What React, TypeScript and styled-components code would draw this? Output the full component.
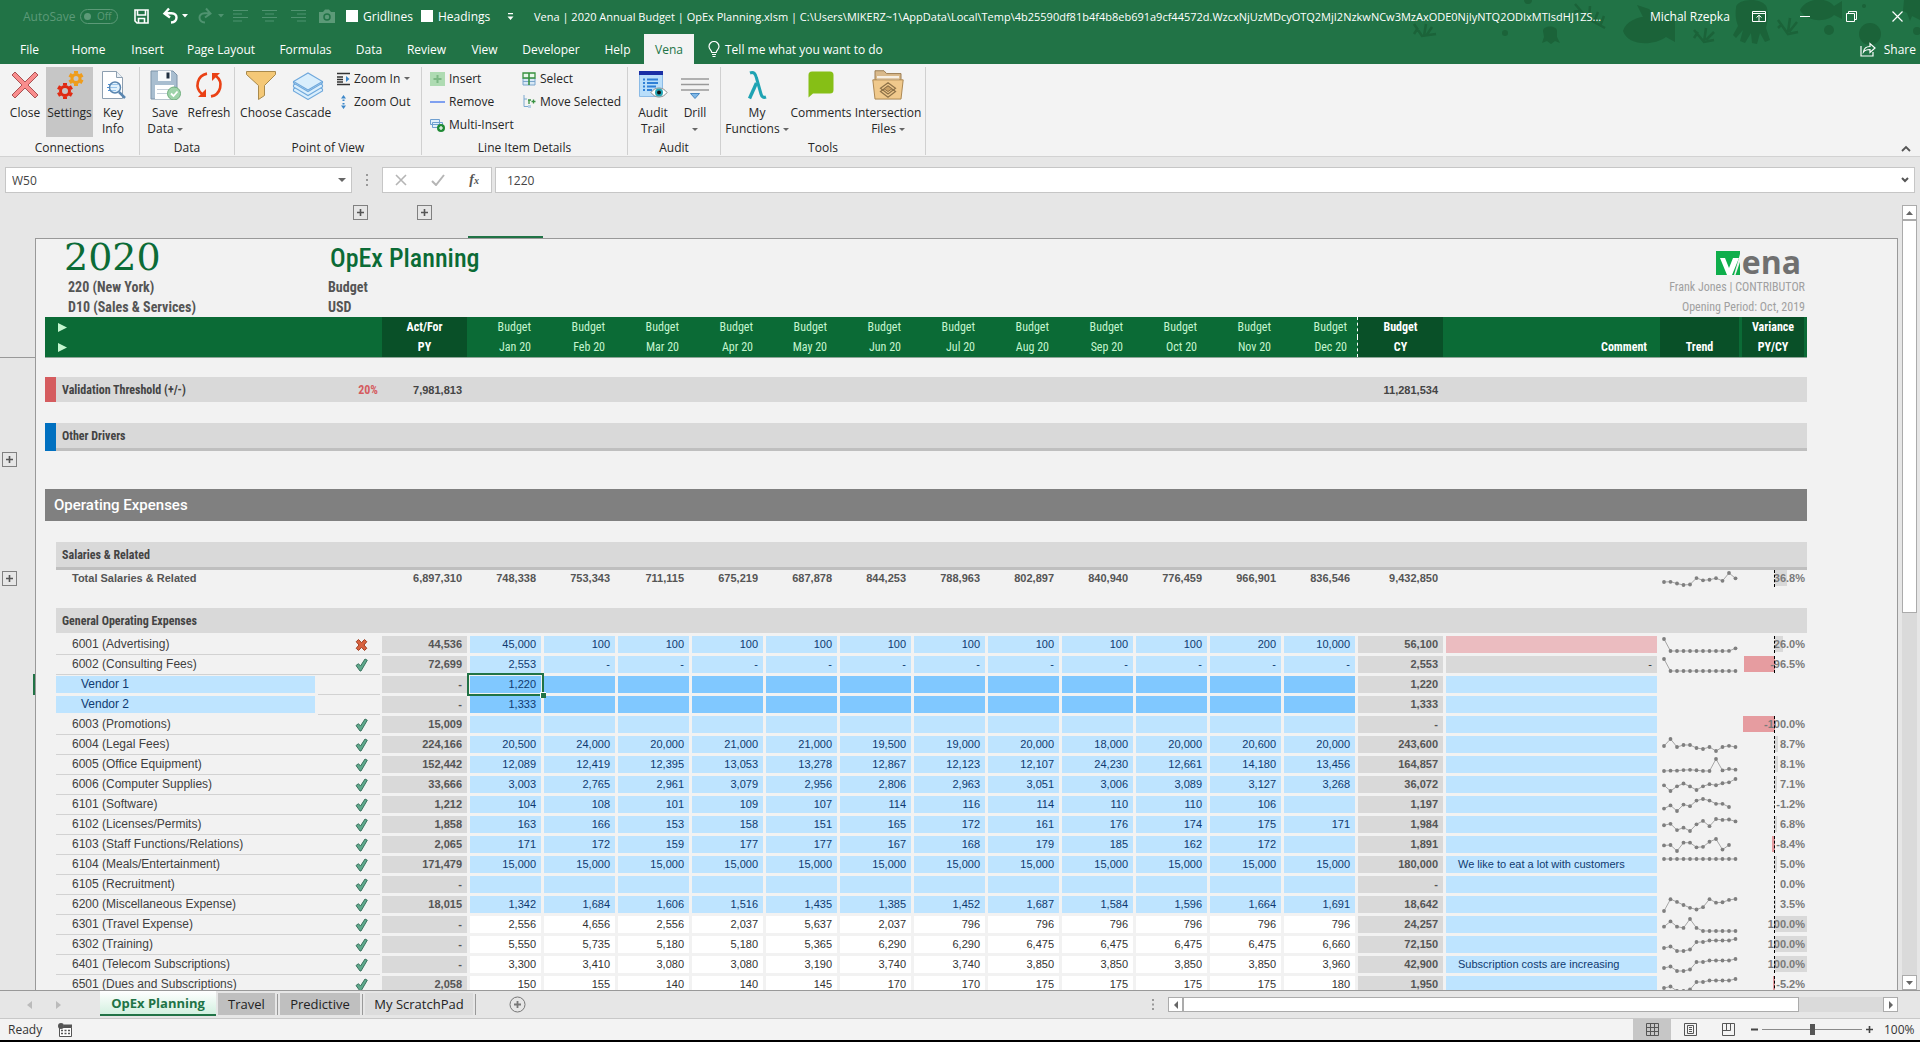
import React from "react";
import styled, { createGlobalStyle, css } from "styled-components";

const UI = `"Open Sans", "Noto Sans", sans-serif`;
const GRID = `"Liberation Sans", Arial, sans-serif`;
const NARROW = `"Liberation Sans Narrow", "Arial Narrow", "Roboto Condensed", Roboto, sans-serif`;

const Global = createGlobalStyle`
  *, *::before, *::after { box-sizing: border-box; }
  body { margin: 0; background: #000; font-family: ${UI}; font-size: 12px; color: #262626; }
  button, input { font: inherit; color: inherit; }
  button { margin: 0; padding: 0; border: 0; background: none; cursor: default; white-space: nowrap; }
  svg { display: block; flex: none; }
`;

/* ---------- frame ---------- */

const Window = styled.div`
  height: 100vh;
  display: flex;
  flex-direction: column;
  overflow: hidden;
  background: #e6e6e6;
  border-bottom: 2px solid #000;
`;

const Header = styled.header`
  position: relative;
  flex: none;
  background: #217346;
  color: #fff;
`;

const Doodles = styled.svg`
  position: absolute;
  top: 0;
  right: 0;
`;

const TitleBar = styled.div`
  position: relative;
  display: flex;
  align-items: center;
  height: 32px;
  padding-left: 23px;
`;

const QuickAccess = styled.div`
  display: flex;
  align-items: center;
  width: 511px;
  flex: none;
`;

const QuickButton = styled.button<{ $w: number }>`
  width: ${(p) => p.$w}px;
  height: 20px;
  flex: none;
`;

const AutoSave = styled.span`
  width: 57px;
  color: #5c9a78;
`;

const Switch = styled.button`
  display: flex;
  align-items: center;
  gap: 6px;
  width: 38px;
  height: 15px;
  margin-right: 16px;
  padding: 0 5px 0 3px;
  border: 1px solid #5c9a78;
  border-radius: 8px;
  color: #5c9a78;
  font-size: 10px;
  line-height: 12px;
  &::before {
    content: "";
    width: 7px;
    height: 7px;
    border-radius: 50%;
    background: #5c9a78;
  }
`;

const CheckLabel = styled.label<{ $w: number }>`
  display: flex;
  align-items: center;
  gap: 5px;
  width: ${(p) => p.$w}px;
  flex: none;
  white-space: nowrap;
`;

const Check = styled.input`
  appearance: none;
  width: 12px;
  height: 12px;
  margin: 0;
  background: #fff;
`;

const Title = styled.div`
  flex: 1;
  min-width: 0;
  white-space: nowrap;
  font-size: 11px;
`;

const WindowControls = styled.div`
  display: flex;
  align-items: center;
  flex: none;
`;

const User = styled.span`
  width: 86px;
  margin-left: 16px;
  white-space: nowrap;
`;

const ControlButton = styled.button`
  display: flex;
  align-items: center;
  justify-content: center;
  width: 46px;
  height: 30px;
`;

const TabBar = styled.nav`
  position: relative;
  display: flex;
  align-items: flex-end;
  height: 32px;
  padding-left: 3px;
`;

const RibbonTab = styled.button<{ $w: number; $active?: boolean }>`
  width: ${(p) => p.$w}px;
  height: 30px;
  ${(p) => p.$active && css`background: #f3f3f3; color: #217346;`}
`;

const TellMe = styled.button`
  display: flex;
  align-items: center;
  gap: 5px;
  height: 30px;
  margin-left: 14px;
`;

const Share = styled.button`
  display: flex;
  align-items: center;
  gap: 8px;
  height: 30px;
  margin: 0 4px 0 auto;
`;

/* ---------- ribbon ---------- */

const Ribbon = styled.section`
  display: flex;
  flex: none;
  height: 93px;
  background: #f3f3f3;
  border-bottom: 1px solid #d2d2d2;
`;

const Group = styled.div<{ $w: number }>`
  display: flex;
  flex-direction: column;
  width: ${(p) => p.$w}px;
  margin: 3px 0 1px;
  border-right: 1px solid #d0d0d0;
`;

const GroupBody = styled.div`
  display: flex;
  flex: 1;
  padding-left: 4px;
`;

const GroupName = styled.div`
  height: 16px;
  line-height: 18px;
  text-align: center;
`;

const BigButton = styled.button<{ $w: number; $on?: boolean }>`
  display: flex;
  flex-direction: column;
  align-items: center;
  width: ${(p) => p.$w}px;
  height: 70px;
  padding-top: 3px;
  line-height: 16px;
  background: ${(p) => (p.$on ? "#c6c6c6" : "none")};
  & > svg { margin-bottom: 5px; }
`;

const Line = styled.span`
  display: flex;
  align-items: center;
  gap: 3px;
  min-height: 16px;
`;

const Stack = styled.div<{ $w: number; $ml?: number }>`
  display: flex;
  flex-direction: column;
  width: ${(p) => p.$w}px;
  margin-left: ${(p) => p.$ml ?? 0}px;
`;

const SmallButton = styled.button`
  display: flex;
  align-items: center;
  gap: 4px;
  height: 23px;
`;

const Collapse = styled.button`
  align-self: flex-end;
  margin: 0 9px 4px auto;
`;

/* ---------- formula bar ---------- */

const FormulaBar = styled.div`
  display: flex;
  align-items: center;
  flex: none;
  height: 36px;
  padding: 10px 5px 0;
`;

const Field = styled.div<{ $w?: number }>`
  display: flex;
  align-items: center;
  ${(p) => (p.$w ? css`width: ${p.$w}px; flex: none;` : css`flex: 1;`)}
  height: 26px;
  background: #fff;
  border: 1px solid #c6c6c6;
  padding-right: 5px;
`;

const TextBox = styled.input<{ $pad: number }>`
  flex: 1;
  min-width: 0;
  height: 22px;
  border: 0;
  outline: 0;
  padding: 0 0 0 ${(p) => p.$pad}px;
  background: transparent;
  font-size: 12px;
  color: #444;
`;

const Grip = styled.div`
  width: 30px;
  display: flex;
  justify-content: center;
`;

const FormulaButtons = styled.div`
  display: flex;
  align-items: center;
  justify-content: space-around;
  width: 110px;
  height: 26px;
  margin-right: 3px;
  background: #fff;
  border: 1px solid #c6c6c6;
`;

const Fx = styled.button`
  font-family: "Liberation Serif", serif;
  font-style: italic;
  font-weight: bold;
  font-size: 14px;
  color: #555;
  & > sub { font-size: 10px; vertical-align: baseline; }
`;

/* ---------- work area ---------- */

const Work = styled.main`
  display: flex;
  flex: 1;
  min-height: 0;
`;

const SheetColumn = styled.div`
  display: flex;
  flex-direction: column;
  flex: 1;
  min-width: 0;
`;

const ColumnOutline = styled.div`
  display: flex;
  flex: none;
  height: 45px;
  padding: 12px 0 0 353px;
`;

const Expand = styled.button<{ $mt?: number }>`
  display: flex;
  align-items: center;
  justify-content: center;
  flex: none;
  width: 15px;
  height: 15px;
  margin-top: ${(p) => p.$mt ?? 0}px;
  border: 1px solid #808080;
`;

const ExpandGap = styled.div`
  width: 49px;
`;

const ColumnMark = styled.div`
  align-self: flex-end;
  width: 75px;
  height: 2px;
  margin-left: 36px;
  background: #217346;
`;

const SheetRow = styled.div`
  display: flex;
  flex: 1;
  min-height: 0;
`;

const RowOutline = styled.div`
  flex: none;
  width: 35px;
  overflow: hidden;
`;

const Frozen = styled.div`
  height: 120px;
  border-bottom: 1px solid #999;
`;

const RowMarks = styled.div`
  display: flex;
  flex-direction: column;
  padding: 94px 0 0 2px;
`;

const RowMark = styled.div`
  align-self: flex-end;
  width: 2px;
  height: 21px;
  margin-top: 88px;
  background: #217346;
`;

const Sheet = styled.div`
  display: flex;
  flex-direction: column;
  flex: 1;
  min-width: 0;
  background: #f2f2f2;
  border: 1px solid #999;
  border-bottom: 0;
`;

const GridPane = styled.div`
  flex: 1;
  min-height: 0;
  overflow: hidden;
`;

const Info = styled.div`
  display: flex;
  flex: none;
  height: 78px;
  padding: 0 92px 0 28px;
  color: #555;
`;

const InfoBlock = styled.div<{ $w?: number; $right?: boolean }>`
  display: flex;
  flex-direction: column;
  ${(p) => (p.$w ? css`width: ${p.$w}px;` : css`flex: 1;`)}
  align-items: ${(p) => (p.$right ? "flex-end" : "flex-start")};
`;

const Year = styled.h1`
  margin: 0;
  height: 38px;
  line-height: 36px;
  font-family: "DejaVu Serif", serif;
  font-weight: normal;
  font-size: 38px;
  color: #0b6b36;
`;

const PlanName = styled.h2`
  margin: 0;
  height: 38px;
  line-height: 38px;
  padding-left: 6px;
  font-family: ${NARROW};
  font-weight: 500;
  font-size: 26px;
  color: #0b6b36;
`;

const InfoLine = styled.div<{ $light?: boolean }>`
  height: 20px;
  line-height: 20px;
  padding-left: 4px;
  font-family: ${NARROW};
  font-weight: ${(p) => (p.$light ? "normal" : "bold")};
  font-size: ${(p) => (p.$light ? 12 : 14)}px;
  color: ${(p) => (p.$light ? "#a0a0a0" : "#555")};
`;

const Logo = styled.div`
  display: flex;
  align-items: flex-end;
  gap: 2px;
  height: 38px;
  padding: 0 4px 2px 0;
  font-family: "Open Sans", sans-serif;
  font-weight: bold;
  font-size: 32px;
  line-height: 26px;
  color: #707070;
`;

/* ---------- grid ---------- */

const Table = styled.table`
  width: calc(100% - 99px);
  margin-left: 9px;
  table-layout: fixed;
  border-collapse: separate;
  border-spacing: 0;
  font-family: ${GRID};
  font-size: 11px;
  line-height: 17px;
  color: #404040;
  th, td { padding: 0; font-weight: normal; white-space: nowrap; }
`;

const HeadCell = styled.th<{ $dark?: boolean; $align?: string; $dotted?: boolean; $month?: boolean }>`
  height: 20px;
  text-align: ${(p) => p.$align ?? "center"};
  background: ${(p) => (p.$dark ? "#095028" : "#0b6b36")};
  color: ${(p) => (p.$month ? "#c4f5cf" : "#fff")};
  font-family: ${NARROW};
  font-size: 12px;
  && { font-weight: ${(p) => (p.$month ? "normal" : "bold")}; }
  line-height: 20px;
  border-right: 3px solid #0b6b36;
  && { padding-right: ${(p) => (p.$align === "right" ? 10 : 0)}px; }
  ${(p) => p.$dotted && css`border-right: 1px dashed #fff;`}
`;

const Marker = styled.th`
  height: 20px;
  background: #0b6b36;
  && { padding-left: 13px; }
`;

const Gap = styled.td<{ $h: number }>`
  height: ${(p) => p.$h}px;
`;

const FreezeLine = styled.td`
  height: 20px;
  border-top: 1px solid #8fa698;
`;

const Tile = styled.td<{ $c: string }>`
  background: ${(p) => p.$c};
`;

const Band = styled.td<{ $rule?: boolean; $align?: string; $red?: boolean; $narrow?: boolean }>`
  height: ${(p) => (p.$rule ? 28 : 25)}px;
  background: #d9d9d9;
  ${(p) => p.$rule && css`border-bottom: 3px solid #bfbfbf;`}
  text-align: ${(p) => p.$align ?? "left"};
  && { padding: 2px ${(p) => (p.$align ? (p.$red ? 4 : 8) : 0)}px 0 ${(p) => (p.$align ? 0 : 6)}px; font-weight: bold; }
  ${(p) => p.$narrow && css`font-family: ${NARROW}; font-size: 12px;`}
  color: ${(p) => (p.$red ? "#d55c5f" : "#444")};
`;

const SectionBand = styled.td`
  height: 32px;
  background: #808080;
  color: #fff;
  font-family: Roboto, sans-serif;
  font-size: 15px;
  && { padding-left: 9px; font-weight: 500; }
`;

const line = css`
  background: linear-gradient(#d2d2d2, #d2d2d2) 0 18px / 100% 1px no-repeat;
`;

const Label = styled.td<{ $kind: "total" | "item" | "vendor" }>`
  height: 20px;
  vertical-align: top;
  font-size: 12px;
  && { padding-left: ${(p) => (p.$kind === "vendor" ? 25 : 16)}px; }
  ${(p) => p.$kind === "item" && line}
  ${(p) => p.$kind === "total" && css`&& { font-weight: bold; } font-size: 11px; color: #555;`}
  ${(p) => p.$kind === "vendor" && css`
    background: #bee4ff;
    border: solid #f2f2f2;
    border-width: 0 3px 3px 0;
    color: #0f3a70;
  `}
`;

const Status = styled.td<{ $line?: boolean }>`
  vertical-align: top;
  && { padding: 2px 0 0 37px; }
  ${(p) => p.$line && line}
  background-size: calc(100% - 2px) 1px;
`;

const fills: Record<string, string> = {
  none: "transparent",
  grey: "#d9d9d9",
  blue: "#bee4ff",
  strong: "#80c8ff",
  white: "#ffffff",
  pink: "#ebbcc0",
};

const Num = styled.td<{ $fill: string; $bold?: boolean; $left?: boolean }>`
  position: relative;
  vertical-align: top;
  text-align: ${(p) => (p.$left ? "left" : "right")};
  background: ${(p) => fills[p.$fill]};
  border: solid ${(p) => (p.$fill === "none" ? "transparent" : "#f2f2f2")};
  border-width: 0 3px 3px 0;
  && { padding: 0 5px 0 ${(p) => (p.$left ? 12 : 0)}px; font-weight: ${(p) => (p.$bold ? "bold" : "normal")}; }
  color: ${(p) => (p.$fill === "blue" || p.$fill === "strong" ? "#0f3a70" : p.$bold ? "#555" : "#333")};
`;

const Selection = styled.span`
  position: absolute;
  z-index: 1;
  top: -3px;
  left: -3px;
  right: -3px;
  bottom: -3px;
  border: 2px solid #217346;
  &::after {
    content: "";
    position: absolute;
    right: -4px;
    bottom: -4px;
    width: 6px;
    height: 6px;
    background: #217346;
    border: solid #fff;
    border-width: 1px 0 0 1px;
  }
`;

const Trend = styled.td`
  vertical-align: top;
`;

const Variance = styled.td`
  position: relative;
  vertical-align: top;
  text-align: right;
  color: #7a7a7a;
  && { padding-right: 2px; font-weight: bold; }
`;

const Bar = styled.span<{ $neg: boolean }>`
  position: absolute;
  top: 0;
  height: 16px;
  ${(p) => (p.$neg ? "right: 32px;" : "left: 33px;")}
  background: ${(p) => (p.$neg ? "#e69ca0" : "#d9d9d9")};
`;

const Axis = styled.span`
  position: absolute;
  top: 0;
  left: 32px;
  height: 17px;
  border-left: 1px dashed #000;
`;

const Percent = styled.span`
  position: relative;
`;

/* ---------- scrolling, sheet tabs, status ---------- */

const VScroll = styled.div`
  display: flex;
  flex-direction: column;
  flex: none;
  width: 22px;
  padding: 12px 3px 0 4px;
`;

const ScrollButton = styled.button`
  display: flex;
  align-items: center;
  justify-content: center;
  flex: none;
  width: 15px;
  height: 15px;
  background: #fff;
  border: 1px solid #ababab;
`;

const VTrack = styled.div`
  flex: 1;
  background: #dadada;
`;

const VThumb = styled.div`
  height: 52%;
  background: #fff;
  border: 1px solid #ababab;
`;

const SheetTabs = styled.nav`
  display: flex;
  flex: none;
  height: 28px;
  padding-right: 22px;
  border-top: 1px solid #999;
`;

const TabArrows = styled.div`
  display: flex;
  align-items: center;
  gap: 22px;
  width: 100px;
  padding-left: 27px;
`;

const SheetTab = styled.button<{ $w: number; $tone: string }>`
  width: ${(p) => p.$w}px;
  height: 22px;
  margin: 2px 2px 0 0;
  font-size: 13px;
  line-height: 20px;
  color: #222;
  background: ${(p) => p.$tone};
`;

const ActiveTab = styled(SheetTab)`
  height: 25px;
  margin-top: 0;
  font-weight: bold;
  color: #217346;
  background: linear-gradient(#fff, #d3f0e0);
  border-bottom: 2px solid #217346;
`;

const TabRule = styled.span`
  width: 1px;
  height: 21px;
  margin: 3px 2px 0 0;
  background: #999;
`;

const AddSheet = styled.button`
  margin-left: 31px;
`;

const HScroll = styled.div`
  display: flex;
  align-items: center;
  width: 746px;
  margin-left: auto;
`;

const HTrack = styled.div`
  flex: 1;
  height: 15px;
  background: #dadada;
`;

const HThumb = styled.div`
  width: 88%;
  height: 15px;
  background: #fff;
  border: 1px solid #ababab;
`;

const HGrip = styled.div`
  width: 16px;
`;

const StatusBar = styled.footer`
  display: flex;
  align-items: center;
  flex: none;
  height: 22px;
  padding: 0 8px;
  background: #f3f3f3;
  border-top: 1px solid #c8c8c8;
  color: #333;
`;

const MacroButton = styled.button`
  margin-left: 16px;
`;

const ViewButton = styled.button<{ $on?: boolean }>`
  display: flex;
  align-items: center;
  justify-content: center;
  width: 38px;
  height: 21px;
  background: ${(p) => (p.$on ? "#c6c6c6" : "none")};
`;

const Views = styled.div`
  display: flex;
  margin-left: auto;
`;

const ZoomButton = styled.button`
  margin: 0 3px;
`;

const ZoomRange = styled.input`
  appearance: none;
  width: 100px;
  height: 14px;
  margin: 0;
  background: linear-gradient(#8a8a8a, #8a8a8a) 0 50% / 100% 1px no-repeat;
  &::-webkit-slider-thumb {
    appearance: none;
    width: 5px;
    height: 11px;
    background: #555;
  }
`;

const ZoomText = styled.span`
  width: 28px;
  margin-left: 7px;
  white-space: nowrap;
`;

/* ---------- icons ---------- */

const Caret = ({ color = "#666", size = 6 }: { color?: string; size?: number }) => (
  <svg width={size} height={size / 2} viewBox="0 0 6 3"><path d="M0 0h6L3 3z" fill={color} /></svg>
);

const CloseIcon = () => (
  <svg width="30" height="30" viewBox="0 0 30 30">
    <path d="M5 2l10 10L25 2l3 3-10 10 10 10-3 3-10-10L5 28l-3-3 10-10L2 5z" fill="#f98d8d" stroke="#a85252" strokeWidth="1" />
  </svg>
);

const Gear = ({ cx, cy, r, color }: { cx: number; cy: number; r: number; color: string }) => (
  <g fill="none" stroke={color}>
    <circle cx={cx} cy={cy} r={r} strokeWidth="3" />
    {[0, 60, 120, 180, 240, 300].map((a) => (
      <path key={a} d={`M${cx} ${cy - r - 1}v-2.500`} strokeWidth="4" transform={`rotate(${a} ${cx} ${cy})`} />
    ))}
  </g>
);

const SettingsIcon = () => (
  <svg width="30" height="30" viewBox="0 0 30 30">
    <Gear cx={21} cy={8.5} r={4} color="#ef9c1b" />
    <Gear cx={10} cy={21} r={4.5} color="#e02a12" />
  </svg>
);

const KeyInfoIcon = () => (
  <svg width="30" height="30" viewBox="0 0 30 30">
    <path d="M4.500 1.500h14l6 6v21h-20z" fill="#fff" stroke="#8d9fb0" />
    <path d="M18.500 1.500v6h6" fill="#e8eef4" stroke="#8d9fb0" />
    <path d="M10 14.500h10M9 17.500h10M10 20.500h8" stroke="#4c8fd6" />
    <circle cx="17" cy="17.500" r="5.500" fill="#cfeafa" fillOpacity=".6" stroke="#5a86b0" strokeWidth="1.500" />
    <path d="M21 22l6 6" stroke="#5a86b0" strokeWidth="2.500" />
  </svg>
);

const SaveDataIcon = () => (
  <svg width="32" height="30" viewBox="0 0 32 30">
    <path d="M2 1h22l4 4v24H2z" fill="#a9bed0" stroke="#7d93a8" />
    <path d="M9 1h13v10H9z" fill="#f6f9fb" />
    <path d="M17.500 2.500h3v6h-3z" fill="#1e2f40" />
    <path d="M6 15h19v14H6z" fill="#fff" />
    <path d="M8 19.500h14M8 23.500h14" stroke="#c6d0da" />
    <circle cx="25" cy="23.500" r="6.500" fill="#9ed3a9" stroke="#6fae7c" />
    <path d="M22 23.500l2.500 2.500 4-4.500" fill="none" stroke="#fff" strokeWidth="1.800" />
  </svg>
);

const RefreshIcon = () => (
  <svg width="30" height="30" viewBox="0 0 30 30" fill="none" stroke="#ea4115" strokeWidth="2.600">
    <path d="M13 3.600A11.500 11.500 0 0 0 8 24" />
    <path d="M17 26.400A11.500 11.500 0 0 0 22 6" />
    <path d="M4 27h8v-8z" fill="#ea4115" stroke="none" />
    <path d="M26 3h-8v8z" fill="#ea4115" stroke="none" />
  </svg>
);

const FunnelIcon = () => (
  <svg width="32" height="30" viewBox="0 0 32 30">
    <path d="M1.500 1.500h29v3l-11 11v10l-6 4v-14l-12-11z" fill="#f4c877" stroke="#a98a4c" />
  </svg>
);

const CascadeIcon = () => (
  <svg width="32" height="30" viewBox="0 0 32 30" fill="#d9eefc" stroke="#6fa8dc" strokeWidth="1.100">
    <path d="M1.500 19L16 10.500 30.500 19v2L16 29.500 1.500 21z" />
    <path d="M1.500 15L16 6.500 30.500 15v2L16 25.500 1.500 17z" />
    <path d="M1.500 11.500L16 3l14.500 8.500v1.500L16 21.500 1.500 13z" />
    <path d="M1.500 11.500L16 20l14.500-8.500" fill="none" />
  </svg>
);

const ZoomInIcon = () => (
  <svg width="13" height="14" viewBox="0 0 13 14" stroke="#333" strokeWidth="1.400">
    <path d="M0 1.500h13M0 12.500h13M0 5h6M0 7.500h6M0 10h6" /><path d="M9 4l3.500 3L9 10z" fill="#3c87c9" stroke="none" />
  </svg>
);

const ZoomOutIcon = () => (
  <svg width="13" height="14" viewBox="0 0 13 14" fill="#3c87c9"><path d="M6.500 0L9 3.500H4zM4 10.500h5L6.500 14zM5.500 4.500h2v1.500h-2zM5.500 8h2v1.500h-2z" /></svg>
);

const InsertIcon = () => (
  <svg width="15" height="14" viewBox="0 0 15 14"><path d="M0 0h15v14H0z" fill="#aedbb2" /><path d="M7.500 3v8M3.500 7h8" stroke="#7cb884" strokeWidth="2" /></svg>
);

const RemoveIcon = () => (
  <svg width="15" height="14" viewBox="0 0 15 14"><path d="M0 7h15" stroke="#7fa0f0" strokeWidth="2" /></svg>
);

const MultiInsertIcon = () => (
  <svg width="15" height="14" viewBox="0 0 15 14">
    <path d="M.5 1.500h9v5h-9zM2.500 4.500h10v5h-10z" fill="#e2effa" stroke="#6f9fd0" />
    <circle cx="11" cy="10" r="4" fill="#1f8a35" /><path d="M11 8v4M9 10h4" stroke="#fff" strokeWidth="1.200" />
  </svg>
);

const SelectIcon = () => (
  <svg width="14" height="14" viewBox="0 0 14 14"><path d="M1 6h12v7H1z" fill="#d8e8f5" stroke="#7ba6cc" /><path d="M1 9.500h12" stroke="#7ba6cc" /><path d="M1 1h12v5H1z" fill="#e9f7eb" stroke="#37913f" strokeWidth="1.300" /><path d="M7 1v12" stroke="#37913f" strokeWidth="1.600" /></svg>
);

const MoveIcon = () => (
  <svg width="14" height="14" viewBox="0 0 14 14" fill="none"><path d="M2 0v11.500h4M2 4h3" stroke="#7aa8cf" /><path d="M6 10h3v3H6z" fill="#b6cfe6" /><path d="M7 5v4M9.500 6.500h4M11.500 4.500v4M6 5h3" stroke="#37913f" strokeWidth="1.300" /></svg>
);

const AuditIcon = () => (
  <svg width="30" height="30" viewBox="0 0 30 30">
    <path d="M1.500 1.500h23v25h-23z" fill="#b9defa" stroke="#8bbbe6" /><path d="M1 1h24v4H1z" fill="#1a2fa5" />
    <path d="M5 9.500h2M9 9.500h11M5 13h2M9 13h11M5 16.500h2M9 16.500h9M5 20h2M9 20h5" stroke="#2f7fd6" strokeWidth="1.800" />
    <path d="M13 22.500c4-6 12-6 16 0-4 6-12 6-16 0z" fill="#fff" stroke="#8c8c8c" /><circle cx="21" cy="22.500" r="4" fill="#25a5b5" /><circle cx="21" cy="22.500" r="2" fill="#111" />
  </svg>
);

const DrillIcon = () => (
  <svg width="30" height="30" viewBox="0 0 30 30"><path d="M1 9h28M1 14.500h28M1 20h28" stroke="#9a9a9a" strokeWidth="1.600" /><path d="M10.500 23.500h9L15 28.500z" fill="#7fb8e8" stroke="#4a88c0" /></svg>
);

const LambdaIcon = () => (
  <svg width="30" height="30" viewBox="0 0 30 30" fill="none" stroke="#1fa3b3">
    <path d="M8 3c4-1.500 5.500 1 6.500 5l4.500 16c.8 3 2.500 4 5 3" strokeWidth="3" /><path d="M14.500 13L7.500 28.500" strokeWidth="3.400" />
  </svg>
);

const CommentsIcon = () => (
  <svg width="30" height="30" viewBox="0 0 30 30"><path d="M6 1.500h18a3.500 3.500 0 0 1 3.500 3.500v15a3.500 3.500 0 0 1-3.500 3.500H7l-4.500 4V5A3.500 3.500 0 0 1 6 1.500z" fill="#86bf16" /></svg>
);

const FilesIcon = () => (
  <svg width="32" height="30" viewBox="0 0 32 32" preserveAspectRatio="none">
    <path d="M3 12V.8h9l2.500 3H29V12" fill="#d9b98b" stroke="#9a7b4f" /><path d="M5 7.500h22M5 10h22" stroke="#fff" strokeWidth="1.500" />
    <path d="M.8 10.500h30.400L29 31H3z" fill="#f0c98c" stroke="#a98450" /><path d="M16 13.500l7.500 6-7.500 6-7.500-6zM16 17l7.500 6-7.500 6-7.500-6z" fill="none" stroke="#8f7349" strokeWidth="1.300" />
    <path d="M16 17l4 3-4 3-4-3z" fill="#c99f63" stroke="#8f7349" />
  </svg>
);

const PlusGlyph = () => (
  <svg width="9" height="9" viewBox="0 0 9 9"><path d="M4.500 1v7M1 4.500h7" stroke="#555" strokeWidth="1.600" /></svg>
);

const Tick = () => (
  <svg width="13" height="14" viewBox="0 0 13 14"><path d="M1 7.500l2.500-1.800 2 2.300L10 1l2.300 1.200L6 13H5z" fill="#5fa98c" stroke="#3b7560" strokeWidth="1" strokeLinejoin="round" /></svg>
);

const Cross = () => (
  <svg width="13" height="14" viewBox="0 0 13 14"><path d="M3.500 1.500l3 3.200 3-3.200 2.300 2.200L9 7l2.800 3.300-2.300 2.200-3-3.200-3 3.200-2.300-2.200L4 7 1.200 3.700z" fill="#d9623f" stroke="#a03f22" strokeWidth="1" strokeLinejoin="round" /></svg>
);

const AlignIcon = ({ inset }: { inset: number }) => (
  <svg width="15" height="14" viewBox="0 0 15 14"><path d={`M0 1.500h15M${inset} 5h9M0 8.500h15M${inset} 12h9`} stroke="#4f9370" strokeWidth="1.200" /></svg>
);

const VMark = () => (
  <svg width="24" height="24" viewBox="0 0 24 24"><path d="M0 0h24v24H0z" fill="#0eae4b" /><path d="M4 7h5l4 10 4-10h6l-7 17h-5z" fill="#fff" /><path d="M24 3v21h-6z" fill="#f2f2f2" /><path d="M24 11v13h-4.500z" fill="#0eae4b" /></svg>
);

/* ---------- data ---------- */

type Cell = number | null;
interface Row {
  name: string;
  kind: "item" | "vendor" | "total";
  ok?: boolean;
  py: Cell;
  months: Cell[];
  cy: Cell;
  fill: string;
  comment?: string;
  commentFill?: string;
  variance?: number;
}

const B: Cell[] = Array(12).fill(null);

const total: Row = {
  name: "Total Salaries & Related", kind: "total", py: 6897310, cy: 9432850, fill: "none", variance: 36.8,
  months: [748338, 753343, 711115, 675219, 687878, 844253, 788963, 802897, 840940, 776459, 966901, 836546],
};

const rows: Row[] = [
  { name: "6001 (Advertising)", kind: "item", ok: false, py: 44536, months: [45000, 100, 100, 100, 100, 100, 100, 100, 100, 100, 200, 10000], cy: 56100, fill: "blue", commentFill: "pink", variance: 26 },
  { name: "6002 (Consulting Fees)", kind: "item", ok: true, py: 72699, months: [2553, 0, 0, 0, 0, 0, 0, 0, 0, 0, 0, 0], cy: 2553, fill: "blue", comment: "-", commentFill: "grey", variance: -96.5 },
  { name: "Vendor 1", kind: "vendor", py: 0, months: [1220, ...B.slice(1)], cy: 1220, fill: "strong" },
  { name: "Vendor 2", kind: "vendor", py: 0, months: [1333, ...B.slice(1)], cy: 1333, fill: "strong" },
  { name: "6003 (Promotions)", kind: "item", ok: true, py: 15009, months: B, cy: 0, fill: "blue", variance: -100 },
  { name: "6004 (Legal Fees)", kind: "item", ok: true, py: 224166, months: [20500, 24000, 20000, 21000, 21000, 19500, 19000, 20000, 18000, 20000, 20600, 20000], cy: 243600, fill: "blue", variance: 8.7 },
  { name: "6005 (Office Equipment)", kind: "item", ok: true, py: 152442, months: [12089, 12419, 12395, 13053, 13278, 12867, 12123, 12107, 24230, 12661, 14180, 13456], cy: 164857, fill: "blue", variance: 8.1 },
  { name: "6006 (Computer Supplies)", kind: "item", ok: true, py: 33666, months: [3003, 2765, 2961, 3079, 2956, 2806, 2963, 3051, 3006, 3089, 3127, 3268], cy: 36072, fill: "blue", variance: 7.1 },
  { name: "6101 (Software)", kind: "item", ok: true, py: 1212, months: [104, 108, 101, 109, 107, 114, 116, 114, 110, 110, 106, null], cy: 1197, fill: "blue", variance: -1.2 },
  { name: "6102 (Licenses/Permits)", kind: "item", ok: true, py: 1858, months: [163, 166, 153, 158, 151, 165, 172, 161, 176, 174, 175, 171], cy: 1984, fill: "blue", variance: 6.8 },
  { name: "6103 (Staff Functions/Relations)", kind: "item", ok: true, py: 2065, months: [171, 172, 159, 177, 177, 167, 168, 179, 185, 162, 172, null], cy: 1891, fill: "blue", variance: -8.4 },
  { name: "6104 (Meals/Entertainment)", kind: "item", ok: true, py: 171479, months: Array(12).fill(15000), cy: 180000, fill: "blue", comment: "We like to eat a lot with customers", variance: 5 },
  { name: "6105 (Recruitment)", kind: "item", ok: true, py: 0, months: B, cy: 0, fill: "blue", variance: 0 },
  { name: "6200 (Miscellaneous Expense)", kind: "item", ok: true, py: 18015, months: [1342, 1684, 1606, 1516, 1435, 1385, 1452, 1687, 1584, 1596, 1664, 1691], cy: 18642, fill: "blue", variance: 3.5 },
  { name: "6301 (Travel Expense)", kind: "item", ok: true, py: 0, months: [2556, 4656, 2556, 2037, 5637, 2037, 796, 796, 796, 796, 796, 796], cy: 24257, fill: "white", variance: 100 },
  { name: "6302 (Training)", kind: "item", ok: true, py: 0, months: [5550, 5735, 5180, 5180, 5365, 6290, 6290, 6475, 6475, 6475, 6475, 6660], cy: 72150, fill: "white", variance: 100 },
  { name: "6401 (Telecom Subscriptions)", kind: "item", ok: true, py: 0, months: [3300, 3410, 3080, 3080, 3190, 3740, 3740, 3850, 3850, 3850, 3850, 3960], cy: 42900, fill: "white", comment: "Subscription costs are increasing", variance: 100 },
  { name: "6501 (Dues and Subscriptions)", kind: "item", ok: true, py: 2058, months: [150, 155, 140, 140, 145, 170, 170, 175, 175, 175, 175, 180], cy: 1950, fill: "white", variance: -5.2 },
];

const monthNames = ["Jan", "Feb", "Mar", "Apr", "May", "Jun", "Jul", "Aug", "Sep", "Oct", "Nov", "Dec"];
const fmt = (v: Cell) => (v === null ? "" : v === 0 ? "-" : v.toLocaleString("en-US"));

const Sparkline = ({ values }: { values: Cell[] }) => {
  const nums = values.filter((v): v is number => v !== null);
  if (nums.length < 2) return null;
  const max = Math.max(...nums);
  const min = Math.min(...nums);
  const pts = nums.map((v, i) => [4 + i * 6.5, max === min ? 3 : 15 - (12 * (v - min)) / (max - min)]);
  return (
    <svg width="80" height="17" viewBox="0 0 80 17">
      <polyline points={pts.map((p) => p.join(",")).join(" ")} fill="none" stroke="#a6a6a6" />
      {pts.map(([x, y]) => <circle key={x} cx={x} cy={y} r="1.900" fill="#7f7f7f" />)}
    </svg>
  );
};

const DataRow = ({ row }: { row: Row }) => {
  const isTotal = row.kind === "total";
  const commentFill = isTotal ? "none" : row.commentFill ?? "blue";
  return (
    <tr>
      <td />
      <Label $kind={row.kind}>{row.name}</Label>
      <Status $line={!isTotal}>{row.ok === undefined ? null : row.ok ? <Tick /> : <Cross />}</Status>
      <Num $fill={isTotal ? "none" : "grey"} $bold>{fmt(row.py)}</Num>
      {row.months.map((v, i) => (
        <Num key={i} $fill={row.fill} $bold={isTotal}>
          {fmt(v)}
          {row.name === "Vendor 1" && i === 0 && <Selection />}
        </Num>
      ))}
      <Num $fill={isTotal ? "none" : "grey"} $bold>{fmt(row.cy)}</Num>
      <Num $fill={commentFill} $left={commentFill === "blue"}>{row.comment}</Num>
      <Trend>{row.kind !== "vendor" && <Sparkline values={row.months} />}</Trend>
      <Variance>
        {row.variance !== undefined && (
          <>
            <Bar $neg={row.variance < 0} style={{ width: Math.round(Math.abs(row.variance) * 0.32) }} />
            <Percent>{row.variance.toFixed(1)}%</Percent>
            <Axis />
          </>
        )}
      </Variance>
    </tr>
  );
};

const Spacer = ({ h }: { h: number }) => <tr><Gap $h={h} colSpan={20} /></tr>;

const PlanTable = () => (
  <Table>
    <colgroup>
      <col style={{ width: 11 }} />
      <col style={{ width: 262 }} />
      <col style={{ width: 64 }} />
      <col style={{ width: 88 }} />
      {monthNames.map((m) => <col key={m} style={{ width: 74 }} />)}
      <col style={{ width: 88 }} />
      <col />
      <col style={{ width: 82 }} />
      <col style={{ width: 65 }} />
    </colgroup>
    <thead>
      {[0, 1].map((r) => (
        <tr key={r}>
          <Marker colSpan={3}><svg width="9" height="9" viewBox="0 0 9 9"><path d="M0 0l9 4.500L0 9z" fill="#c4f5cf" /></svg></Marker>
          <HeadCell $dark>{r ? "PY" : "Act/For"}</HeadCell>
          {monthNames.map((m, i) => (
            <HeadCell key={m} $month $align="right" $dotted={i === 11}>{r ? `${m} 20` : "Budget"}</HeadCell>
          ))}
          <HeadCell $dark>{r ? "CY" : "Budget"}</HeadCell>
          <HeadCell $align="right">{r ? "Comment" : ""}</HeadCell>
          <HeadCell $dark>{r ? "Trend" : ""}</HeadCell>
          <HeadCell $dark>{r ? "PY/CY" : "Variance"}</HeadCell>
        </tr>
      ))}
    </thead>
    <tbody>
      <tr><FreezeLine colSpan={20} /></tr>
      <tr>
        <Tile $c="#d55c5f" />
        <Band $narrow>Validation Threshold (+/-)</Band>
        <Band $narrow $red $align="right">20%</Band>
        <Band $align="right">7,981,813</Band>
        <Band colSpan={12} />
        <Band $align="right">11,281,534</Band>
        <Band colSpan={3} />
      </tr>
      <Spacer h={21} />
      <tr><Tile $c="#0070c0" /><Band $narrow $rule colSpan={19}>Other Drivers</Band></tr>
      <Spacer h={38} />
      <tr><SectionBand colSpan={20}>Operating Expenses</SectionBand></tr>
      <Spacer h={21} />
      <tr><td /><Band $narrow $rule colSpan={18}>Salaries &amp; Related</Band><Band $rule /></tr>
      <DataRow row={total} />
      <Spacer h={18} />
      <tr><td /><Band $narrow colSpan={19}>General Operating Expenses</Band></tr>
      <Spacer h={3} />
      {rows.map((r) => <DataRow key={r.name} row={r} />)}
    </tbody>
  </Table>
);

const tabs: [string, number][] = [["File", 53], ["Home", 65], ["Insert", 53], ["Page Layout", 94], ["Formulas", 75], ["Data", 52], ["Review", 63], ["View", 53], ["Developer", 80], ["Help", 53]];

export default function App() {
  return (
    <>
      <Global />
      <Window>
        <Header>
          <Doodles width="540" height="48" viewBox="0 0 540 48" fill="#1b6339" stroke="none">
            <path d="M243 31c4-14 30-20 44-9l8-4v24l-9-5c-14 10-39 8-43-6zM257 5l12 4 8 8h-14z" />
            <path d="M356 8c0-10 28-11 31 0 2 9 0 15-1 20l4 12-5 2-5-9-3 11-5-1-1-10-6 10-5-2 3-11-7 8-3-3 5-9c-2-6-3-10-2-18z" />
            <path d="M420 10c6-12 26-14 34-4l8-5v18l-8-4c-8 8-28 7-34-5z" />
            <circle cx="490" cy="34" r="11" /><circle cx="449" cy="30" r="5" /><circle cx="125" cy="33" r="3" /><circle cx="148" cy="0" r="4" /><circle cx="484" cy="6" r="2" /><circle cx="537" cy="31" r="4" />
            <path d="M163 31c0-6 14-6 14 0v6l3 6-5-2-4 3-4-3-5 2 2-6z" />
            <path d="M524 0h16v20l-8-4-2 5-3-8-4-2z" />
            <g fill="none" stroke="#1b6339" strokeWidth="2.500">
              <path d="M34 24l8 12 14-2M38 28l-4 6M46 24l-2 12M52 27l-6 9M195 4l12 14 18 10M200 10l-6 2M210 6l-1 12M218 12l-4 10M224 16l-4 10M314 30l10 12 10-2M318 32l-4 6M326 28l-2 14M334 32l-8 8M398 20l10 14 10-2M402 24l-4 4M410 18l-2 14M417 22l-8 10" />
            </g>
          </Doodles>
          <TitleBar>
            <QuickAccess>
              <AutoSave>AutoSave</AutoSave>
              <Switch aria-label="AutoSave">Off</Switch>
              <QuickButton $w={28} aria-label="Save">
                <svg width="15" height="20" viewBox="0 0 15 20" fill="none" stroke="#fff" strokeWidth="1.600"><path d="M1 4h13v13H3l-2-2zM3.500 4v5h8V4M4.500 17v-4.500h6V17" /></svg>
              </QuickButton>
              <QuickButton $w={36} aria-label="Undo">
                <svg width="28" height="20" viewBox="0 0 28 20" fill="none"><path d="M7 2.500L2.500 7.500 8 11.500M2.500 7.300h7c7 0 6.500 8.700-.5 9.200" stroke="#fff" strokeWidth="2.400" /><path d="M20 8h6l-3 3.500z" fill="#fff" /></svg>
              </QuickButton>
              <QuickButton $w={35} aria-label="Redo">
                <svg width="28" height="20" viewBox="0 0 28 20" fill="none"><path d="M8 2.500l4.500 5-5.500 4M12.500 7.300h-6c-7 0-6.500 8.700.5 9.200" stroke="#4f9370" strokeWidth="2" /><path d="M20 8h6l-3 3.500z" fill="#4f9370" /></svg>
              </QuickButton>
              <QuickButton $w={29} aria-label="Align left"><AlignIcon inset={0} /></QuickButton>
              <QuickButton $w={29} aria-label="Center"><AlignIcon inset={3} /></QuickButton>
              <QuickButton $w={28} aria-label="Align right"><AlignIcon inset={6} /></QuickButton>
              <QuickButton $w={27} aria-label="Camera">
                <svg width="16" height="18" viewBox="0 0 16 18"><path d="M0 5h4l2-2.500h4L12 5h4v11H0z" fill="#5c9a78" /><circle cx="8" cy="10" r="3" fill="none" stroke="#217346" strokeWidth="1.500" /></svg>
              </QuickButton>
              <CheckLabel $w={75}><Check type="checkbox" />Gridlines</CheckLabel>
              <CheckLabel $w={86}><Check type="checkbox" />Headings</CheckLabel>
              <QuickButton $w={8} aria-label="Customize"><svg width="7" height="20" viewBox="0 0 7 20" fill="#fff"><path d="M1 7h5v1.200H1zM.5 10.500h6l-3 3.500z" /></svg></QuickButton>
            </QuickAccess>
            <Title>Vena | 2020 Annual Budget | OpEx Planning.xlsm | C:\Users\MIKERZ~1\AppData\Local\Temp\4b25590df81b4f4b8eb691a9cf44572d.WzcxNjUzMDcyOTQ2MjI2NzkwNCw3MzAxODE0NjIyNTQ2ODIxMTIsdHJ1ZS...</Title>
            <WindowControls>
              <User>Michal Rzepka</User>
              <ControlButton aria-label="Ribbon display options"><svg width="14" height="11" viewBox="0 0 14 11" fill="none" stroke="#fff"><path d="M.5.500h13v10H.5zM.5 2.500h13M7 10V4.500M4.500 6.500L7 4.200l2.500 2.300" /></svg></ControlButton>
              <ControlButton aria-label="Minimize"><svg width="10" height="10" viewBox="0 0 10 10"><path d="M0 5.500h10" stroke="#fff" /></svg></ControlButton>
              <ControlButton aria-label="Restore"><svg width="11" height="11" viewBox="0 0 11 11" fill="none" stroke="#fff"><path d="M.5 2.500h8v8h-8zM2.500 2.500v-2h8v8h-2" /></svg></ControlButton>
              <ControlButton aria-label="Close"><svg width="11" height="11" viewBox="0 0 11 11"><path d="M.5.500l10 10M10.500.500l-10 10" stroke="#fff" strokeWidth="1.200" /></svg></ControlButton>
            </WindowControls>
          </TitleBar>
          <TabBar>
            {tabs.map(([t, w]) => <RibbonTab key={t} $w={w}>{t}</RibbonTab>)}
            <RibbonTab $w={50} $active>Vena</RibbonTab>
            <TellMe>
              <svg width="12" height="17" viewBox="0 0 12 17" fill="none" stroke="#fff" strokeWidth="1.200"><path d="M3.800 11.500C3.500 9 1 8.500 1 5.500a5 5 0 0 1 10 0c0 3-2.500 3.500-2.800 6zM4 13.500h4M4.500 15.500h3" /></svg>
              Tell me what you want to do
            </TellMe>
            <Share>
              <svg width="16" height="15" viewBox="0 0 16 15" fill="none" stroke="#fff" strokeWidth="1.200"><path d="M1 4v10h12v-4M3.500 10c.5-4 3-5.500 6.500-5.500V1.500l5 4.500-5 4.500V7.500c-3 0-5 .5-6.500 2.500z" /></svg>
              Share
            </Share>
          </TabBar>
        </Header>

        <Ribbon>
          <Group $w={140}>
            <GroupBody>
              <BigButton $w={42}><CloseIcon />Close</BigButton>
              <BigButton $w={47} $on><SettingsIcon />Settings</BigButton>
              <BigButton $w={40}><KeyInfoIcon /><Line>Key</Line><Line>Info</Line></BigButton>
            </GroupBody>
            <GroupName>Connections</GroupName>
          </Group>
          <Group $w={95}>
            <GroupBody>
              <BigButton $w={42}><SaveDataIcon /><Line>Save</Line><Line>Data <Caret /></Line></BigButton>
              <BigButton $w={46}><RefreshIcon />Refresh</BigButton>
            </GroupBody>
            <GroupName>Data</GroupName>
          </Group>
          <Group $w={187}>
            <GroupBody>
              <BigButton $w={44}><FunnelIcon />Choose</BigButton>
              <BigButton $w={50}><CascadeIcon />Cascade</BigButton>
              <Stack $w={80} $ml={4}>
                <SmallButton><ZoomInIcon />Zoom In <Caret /></SmallButton>
                <SmallButton><ZoomOutIcon />Zoom Out</SmallButton>
              </Stack>
            </GroupBody>
            <GroupName>Point of View</GroupName>
          </Group>
          <Group $w={206}>
            <GroupBody>
              <Stack $w={92} $ml={4}>
                <SmallButton><InsertIcon />Insert</SmallButton>
                <SmallButton><RemoveIcon />Remove</SmallButton>
                <SmallButton><MultiInsertIcon />Multi-Insert</SmallButton>
              </Stack>
              <Stack $w={96}>
                <SmallButton><SelectIcon />Select</SmallButton>
                <SmallButton><MoveIcon />Move Selected</SmallButton>
              </Stack>
            </GroupBody>
            <GroupName>Line Item Details</GroupName>
          </Group>
          <Group $w={93}>
            <GroupBody>
              <BigButton $w={42}><AuditIcon /><Line>Audit</Line><Line>Trail</Line></BigButton>
              <BigButton $w={42}><DrillIcon /><Line>Drill</Line><Line><Caret /></Line></BigButton>
            </GroupBody>
            <GroupName>Audit</GroupName>
          </Group>
          <Group $w={205}>
            <GroupBody>
              <BigButton $w={64}><LambdaIcon /><Line>My</Line><Line>Functions <Caret /></Line></BigButton>
              <BigButton $w={64}><CommentsIcon />Comments</BigButton>
              <BigButton $w={70}><FilesIcon /><Line>Intersection</Line><Line>Files <Caret /></Line></BigButton>
            </GroupBody>
            <GroupName>Tools</GroupName>
          </Group>
          <Collapse aria-label="Collapse ribbon"><svg width="10" height="7" viewBox="0 0 10 7"><path d="M1 6l4-4 4 4" fill="none" stroke="#555" strokeWidth="1.800" /></svg></Collapse>
        </Ribbon>

        <FormulaBar>
          <Field $w={347}><TextBox $pad={6} aria-label="Name box" defaultValue="W50" /><Caret size={8} /></Field>
          <Grip><svg width="2" height="12" viewBox="0 0 2 12" fill="#999"><path d="M0 0h2v2H0zM0 5h2v2H0zM0 10h2v2H0z" /></svg></Grip>
          <FormulaButtons>
            <button aria-label="Cancel"><svg width="12" height="12" viewBox="0 0 12 12"><path d="M1 1l10 10M11 1L1 11" stroke="#b5b5b5" strokeWidth="1.600" /></svg></button>
            <button aria-label="Enter"><svg width="14" height="12" viewBox="0 0 14 12"><path d="M1 7l4 4 8-10" fill="none" stroke="#b5b5b5" strokeWidth="2" /></svg></button>
            <Fx>f<sub>x</sub></Fx>
          </FormulaButtons>
          <Field><TextBox $pad={11} aria-label="Formula" defaultValue="1220" /><svg width="8" height="6" viewBox="0 0 8 6"><path d="M1 1l3 3 3-3" fill="none" stroke="#555" strokeWidth="2" /></svg></Field>
        </FormulaBar>

        <Work>
          <SheetColumn>
            <ColumnOutline>
              <Expand aria-label="Expand columns"><PlusGlyph /></Expand>
              <ExpandGap />
              <Expand aria-label="Expand columns"><PlusGlyph /></Expand>
              <ColumnMark />
            </ColumnOutline>
            <SheetRow>
              <RowOutline>
                <Frozen />
                <RowMarks>
                  <Expand aria-label="Expand rows"><PlusGlyph /></Expand>
                  <Expand $mt={104} aria-label="Expand rows"><PlusGlyph /></Expand>
                  <RowMark />
                </RowMarks>
              </RowOutline>
              <Sheet>
                <Info>
                  <InfoBlock $w={260}>
                    <Year>2020</Year>
                    <InfoLine>220 (New York)</InfoLine>
                    <InfoLine>D10 (Sales &amp; Services)</InfoLine>
                  </InfoBlock>
                  <InfoBlock>
                    <PlanName>OpEx Planning</PlanName>
                    <InfoLine>Budget</InfoLine>
                    <InfoLine>USD</InfoLine>
                  </InfoBlock>
                  <InfoBlock $right>
                    <Logo><VMark />ena</Logo>
                    <InfoLine $light>Frank Jones | CONTRIBUTOR</InfoLine>
                    <InfoLine $light>Opening Period: Oct, 2019</InfoLine>
                  </InfoBlock>
                </Info>
                <GridPane>
                  <PlanTable />
                </GridPane>
              </Sheet>
            </SheetRow>
          </SheetColumn>
          <VScroll>
            <ScrollButton aria-label="Scroll up"><svg width="7" height="4" viewBox="0 0 7 4"><path d="M0 4h7L3.500 0z" fill="#666" /></svg></ScrollButton>
            <VTrack><VThumb /></VTrack>
            <ScrollButton aria-label="Scroll down"><svg width="7" height="4" viewBox="0 0 7 4"><path d="M0 0h7L3.500 4z" fill="#666" /></svg></ScrollButton>
          </VScroll>
        </Work>

        <SheetTabs>
          <TabArrows>
            <svg width="6" height="8" viewBox="0 0 6 8"><path d="M5 0v8L0 4z" fill="#bbb" /></svg>
            <svg width="6" height="8" viewBox="0 0 6 8"><path d="M1 0v8l5-4z" fill="#bbb" /></svg>
          </TabArrows>
          <ActiveTab $w={116} $tone="#fff">OpEx Planning</ActiveTab>
          <SheetTab $w={57} $tone="#bfbfbf">Travel</SheetTab><TabRule />
          <SheetTab $w={80} $tone="#bfbfbf">Predictive</SheetTab><TabRule />
          <SheetTab $w={108} $tone="#dcdcdc">My ScratchPad</SheetTab><TabRule />
          <AddSheet aria-label="New sheet"><svg width="17" height="17" viewBox="0 0 17 17" fill="none" stroke="#777"><circle cx="8.500" cy="8.500" r="7.500" /><path d="M8.500 5v7M5 8.500h7" strokeWidth="1.800" /></svg></AddSheet>
          <HScroll>
            <HGrip><svg width="2" height="11" viewBox="0 0 2 11" fill="#999"><path d="M0 0h2v2H0zM0 4.500h2v2H0zM0 9h2v2H0z" /></svg></HGrip>
            <ScrollButton aria-label="Scroll left"><svg width="4" height="8" viewBox="0 0 4 8"><path d="M4 0v8L0 4z" fill="#666" /></svg></ScrollButton>
            <HTrack><HThumb /></HTrack>
            <ScrollButton aria-label="Scroll right"><svg width="4" height="8" viewBox="0 0 4 8"><path d="M0 0v8l4-4z" fill="#666" /></svg></ScrollButton>
          </HScroll>
        </SheetTabs>

        <StatusBar>
          Ready
          <MacroButton aria-label="Record macro"><svg width="14" height="14" viewBox="0 0 14 14"><path d="M1.500 4.500h12v9h-12z" fill="#fff" stroke="#555" /><path d="M6 1.500h8v3H6z" fill="#555" /><circle cx="3" cy="3" r="3" fill="#555" /><path d="M3 7.500h2M6.500 7.500h2M10 7.500h2M3 10.500h2M6.500 10.500h2M10 10.500h2" stroke="#555" strokeWidth="1.400" /></svg></MacroButton>
          <Views>
            <ViewButton $on aria-label="Normal view"><svg width="13" height="13" viewBox="0 0 13 13" fill="none" stroke="#555"><path d="M.5.500h12v12H.5zM4.500 0v13M8.500 0v13M0 4.500h13M0 8.500h13" /></svg></ViewButton>
            <ViewButton aria-label="Page layout view"><svg width="13" height="13" viewBox="0 0 13 13" fill="none" stroke="#555"><path d="M.5.500h12v12H.5zM3.500 2.500h6v8h-6zM5 4.500h3M5 6.500h3M5 8.500h3" /></svg></ViewButton>
            <ViewButton aria-label="Page break view"><svg width="13" height="13" viewBox="0 0 13 13" fill="none" stroke="#555"><path d="M.5.500h12v12H.5zM4.500.500v7M8.500.500v7M0 7.500h8.500" /></svg></ViewButton>
          </Views>
          <ZoomButton aria-label="Zoom out"><svg width="9" height="9" viewBox="0 0 9 9"><path d="M1 4.500h7" stroke="#444" strokeWidth="2" /></svg></ZoomButton>
          <ZoomRange type="range" aria-label="Zoom" min={0} max={200} defaultValue={100} />
          <ZoomButton aria-label="Zoom in"><svg width="9" height="9" viewBox="0 0 9 9"><path d="M1 4.500h7M4.500 1v7" stroke="#444" strokeWidth="1.600" /></svg></ZoomButton>
          <ZoomText>100%</ZoomText>
        </StatusBar>
      </Window>
    </>
  );
}
